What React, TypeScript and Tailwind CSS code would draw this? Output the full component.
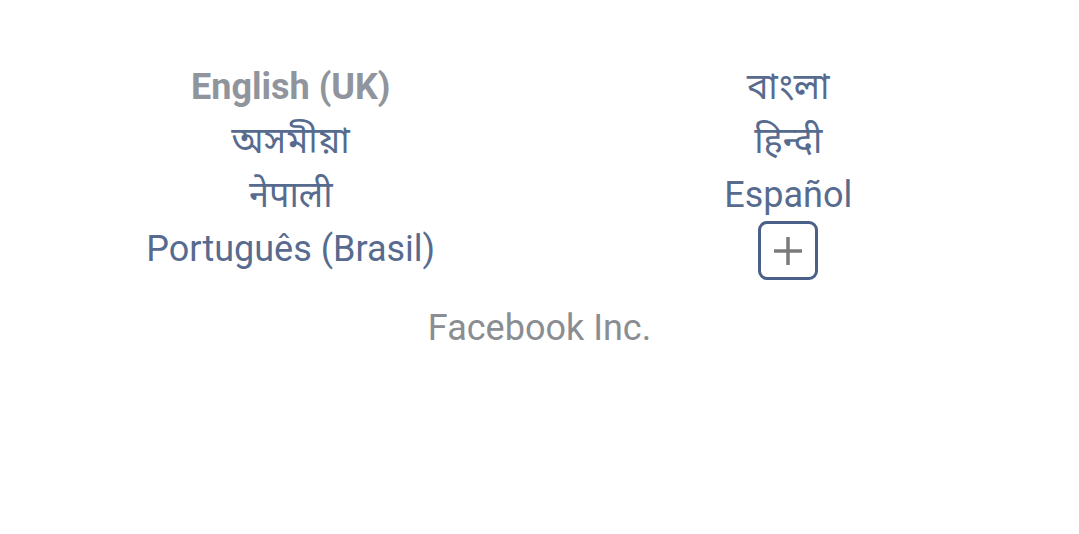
const languages: { left: string; right: string | null }[] = [
  { left: 'English (UK)', right: 'বাংলা' },
  { left: 'অসমীয়া', right: 'हिन्दी' },
  { left: 'नेपाली', right: 'Español' },
  { left: 'Português (Brasil)', right: null },
];

function PlusBox() {
  return (
    <button className="mt-[3px] w-[60px] h-[59px] border-[3px] border-[#4b6088] rounded-[9px] flex items-center justify-center">
      <svg width="28" height="28" viewBox="0 0 28 28">
        <path d="M14 0v28M0 14h28" stroke="#7b7b7b" strokeWidth="3.5" fill="none" />
      </svg>
    </button>
  );
}

export default function App() {
  return (
    <div
      className="w-full h-[534px] bg-white pt-[60px] px-[42px]"
      style={{ fontFamily: 'Roboto, "Noto Sans", "Noto Sans Bengali", "Noto Sans Devanagari", sans-serif' }}
    >
      <div className="grid grid-cols-2">
        {languages.map((row, i) => (
          <div key={i} className="contents">
            <div className="h-[54px] flex items-center justify-center">
              <span
                className={`text-[36px] leading-none ${
                  i === 0 ? 'font-bold text-[#90949c]' : 'text-[#576b8f]'
                }`}
              >
                {row.left}
              </span>
            </div>
            <div className="h-[54px] flex items-center justify-center">
              {row.right ? (
                <span className="text-[36px] leading-none text-[#576b8f]">{row.right}</span>
              ) : (
                <PlusBox />
              )}
            </div>
          </div>
        ))}
      </div>
      <div className="mt-[34px] flex justify-center">
        <span className="text-[36px] leading-none text-[#8a8d91]">Facebook Inc.</span>
      </div>
    </div>
  );
}
